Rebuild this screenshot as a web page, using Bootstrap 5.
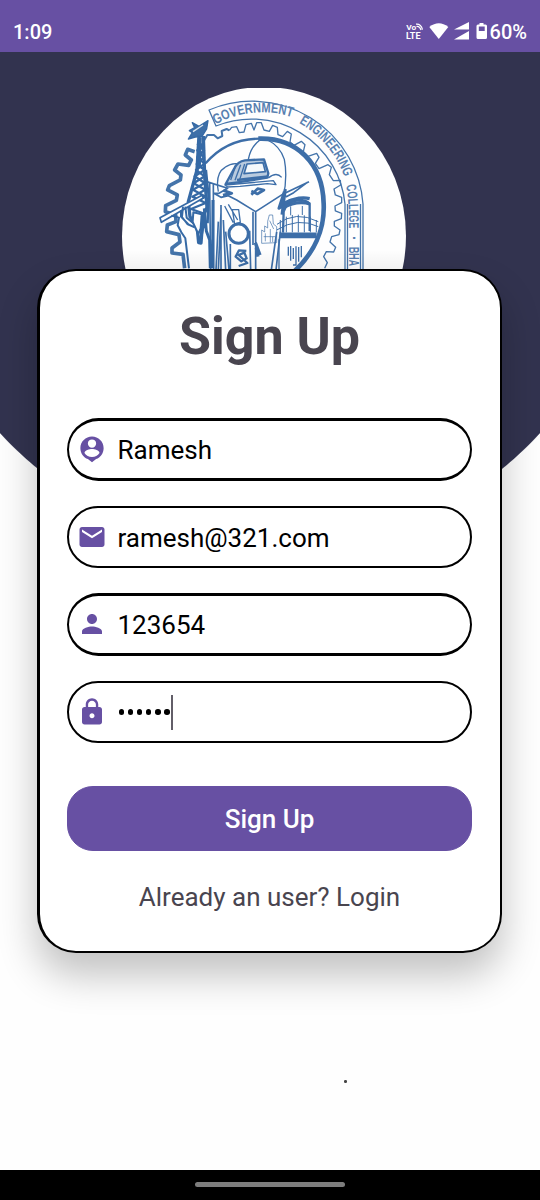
<!DOCTYPE html>
<html lang="en">
<head>
<meta charset="utf-8">
<meta name="viewport" content="width=device-width, initial-scale=1">
<title>Sign Up</title>
<link href="https://cdn.jsdelivr.net/npm/bootstrap@5.3.0/dist/css/bootstrap.min.css" rel="stylesheet">
<style>
  :root { --brand: #6750a3; --navy: #32334f; --ink: #49454f; }
  body { font-family: Roboto, sans-serif; height: 1200px; overflow: hidden; background: #fff; }
  .status-bar { height: 52px; background: var(--brand); font-size: 20px; font-weight: 500; line-height: 24px; padding: 20px 13px 0 13px; }
  .screen { background: radial-gradient(circle at 270px 132.6px, var(--navy) 366.5px, #fefefe 367.5px); padding-top: 36px; }
  .crest { width: 284px; height: 181px; margin-left: 122px; }
  .signup-panel { width: 465px; height: 684px; margin-left: 37px; border: 2.5px solid #000; border-left-width: 3px; border-radius: 39px; padding: 0 28px 0 27px;
    box-shadow: 0 22px 38px 1px rgba(0,0,0,.235); }
  .signup-title { font-size: 52px; font-weight: 700; line-height: 60px; color: var(--ink); margin-top: 36px; margin-bottom: 51px; }
  .fields { gap: 25.5px; }
  .field-box { height: 62px; border: 2px solid #000; padding-left: 8px; gap: 10px; }
  .field-box:nth-child(odd) { border-width: 3px 2px; height: 63px; margin-bottom: -1px; }
  .field-box:nth-child(odd) > * { margin-top: -1.5px; }
  .field-box svg { width: 30px; height: 30px; fill: var(--brand); flex: none; }
  .field-text { font-size: 26px; line-height: 32px; color: #000; border: 0; padding: 2px 0 0 .5px; }
  .pw-dot { width: 5.6px; height: 5.6px; background: #000; }
  .pw-dots { gap: 3.5px; padding: 1px 0 0 1.6px; }
  .caret { width: 2px; height: 35px; background: #625e68; margin-left: -2.2px; }
  .btn-brand { --bs-btn-color: #fff; --bs-btn-bg: var(--brand); --bs-btn-border-color: var(--brand); height: 65px; border-radius: 26px; margin-top: 43px; font-size: 26px; font-weight: 500; padding-top: 8px; }
  .login-line { font-size: 26px; line-height: 32px; color: var(--ink); margin-top: 30px; }
  .stray-dot { width: 2.5px; height: 2.5px; background: #444; margin: 127px 0 0 344px; }
  .nav-strip { height: 30px; padding-bottom: 2px; }
  .nav-pill { width: 150px; height: 5px; background: #7d7d7d; }
</style>
</head>
<body class="d-flex flex-column">
<header class="status-bar d-flex justify-content-between align-items-start text-white flex-shrink-0">
  <span>1:09</span>
  <div class="d-flex">
    <svg width="84" height="24" viewBox="408 20 84 24" fill="#fff">
      <text x="407" y="30" font-size="7.5" font-weight="700" textLength="10" lengthAdjust="spacingAndGlyphs" transform="translate(1.200 0)">Vo</text>
      <text x="408" y="38.5" font-size="8.5" font-weight="700" textLength="14.5" lengthAdjust="spacingAndGlyphs">LTE</text>
      <path d="M418.500 26.500q3-1 4.500 3.500M418 24.200q5-.5 6.500 5.500" fill="none" stroke="#fff" stroke-width="1.200"/>
      <path d="M431.300 27q9.500-7.500 19 0l-9.500 12z"/>
      <path d="M471 22v7.500h-15zM471 31v8.500h-15z"/>
      <path fill-rule="evenodd" d="M481.500 23h4v1.500h2q1.500 0 1.500 1.500v11.500q0 1.500-1.500 1.500h-7.500q-1.500 0-1.500-1.500V26q0-1.500 1.500-1.500h1.500zm-.7 3.500v4.500h5.900v-4.500z"/>
    </svg>
    <span class="battery-level">60%</span>
  </div>
</header>

<main class="screen flex-grow-1">
  <svg class="crest d-block" viewBox="122 88 284 181" role="img" aria-label="College crest">
    <ellipse cx="264" cy="236" rx="142" ry="149" fill="#fefefe"/>
    <g fill="none" stroke="#4474aa" stroke-linejoin="round">
      <!-- lettered band -->
      <path stroke-width="1.300" d="M345 270V204A94 94 0 0 0 216 126L209 110A111 111 0 0 1 363 204V270M347.500 270V204M360.500 270V204"/>
      <!-- thin cog teeth, right side -->
      <g transform="translate(250 80) scale(.3333)" stroke-width="4">
        <path d="M-62 151L-55 142-40 140-32 158-18 156-12 134 4 130 12 150 20 128 34 128 42 150 58 154 68 136 82 142 84 164 98 170 112 154 124 162 120 186 132 196 154 184 165 194 160 215 174 229 200 220 207 232 196 250 207 266 234 254 244 262 238 284 250 302 271 301 272 315 252 327 256 345 275 352 275 368 255 378 256 393 275 400 274 416 253 424 253 438 270 450 267 464 245 470 240 486 257 502 251 516 229 515 221 530 232 548 224 565"/>
      </g>
      <!-- heavy cog teeth, left side -->
      <g transform="translate(110 80) scale(.3333)">
        <path stroke-width="11" d="M254 215L233 208 226 225 244 240 236 256 204 252 194 270 213 285 211 300 178 317 173 330 202 345 199 361 167 377 166 395 197 405 198 425 172 435 170 455 207 464 210 486 186 504 186 519 219 523 224 565"/>
        <path stroke-width="6" d="M280 185L292 165 312 165 323 175 337 168 335 153 350 147 358 151"/>
      </g>
    </g>

    <g transform="translate(205 140) scale(.3333)" fill="none" stroke="#3d6ea8" stroke-width="5" stroke-linejoin="round">
      <!-- inner wheel -->
      <path stroke-width="7" d="M2 70Q65-4 165-4"/>
      <path stroke-width="14" d="M160-4C275-8 353 70 356 190C360 270 325 340 270 392"/>
      <path stroke-width="4" d="M130 58Q137 20 165 0M188 0Q225 18 238 58Q248 110 235 170M40 155Q30 100 60 82Q85 64 110 75"/>
      <!-- tram -->
      <path stroke-width="7" fill="#b9cbdf" d="M62 132L88 85Q98 64 120 61L177 58 190 100 187 113 98 127z"/>
      <path stroke-width="5" fill="#f4f8fb" d="M126 72L174 68 181 95 117 101z"/>
      <path stroke-width="4" d="M92 77L77 120M107 74L90 121M119 72L104 119M60 135L205 122 213 134 187 131 105 139 68 141zM190 114Q214 94 230 112"/>
      <path stroke-width="8" d="M96 120L189 110M139 164L158 146 177 150 157 162 139 153"/>
      <!-- open book -->
      <path d="M5 125L68 145 42 160 25 159 48 172 70 167 95 180 152 215 236 161 312 125M152 215V390M237 161L244 170 266 158 307 127M25 130L26 390M14 130L17 390"/>
      <path stroke-width="9" d="M55 151L80 160 54 166M238 155L222 205 256 181 294 178M241 147L231 224"/>
      <!-- microscope -->
      <path stroke-width="4" d="M59 198L85 248M70 193L98 240M82 209L101 209 106 247 89 252z"/>
      <circle cx="101" cy="281" r="29" stroke-width="9"/>
      <path stroke-width="5" d="M40 245L33 390M48 218L40 390M48 195V390M55 240L62 390M62 275L72 390M76 312V390M134 272L137 390M144 215V315M215 276L199 390M226 275L213 390"/>
      <path stroke-width="7" d="M124 333L102 331 92 350 109 364 125 355 118 338 101 345 127 369 101 378"/>
      <path stroke-width="10" d="M151 308L165 345M154 324L159 350"/>
      <!-- factory -->
      <path stroke-width="2" d="M170 310V270L179 276V258L188 264V244L193 225 203 225 205 252 215 260V308zM176 290H211M181 280V304M196 267V307M203 290V306M194 242L206 267"/>
      <!-- tower and railing -->
      <path stroke-width="7" fill="#fefefe" d="M234 278L236 215Q245 184 280 180Q304 180 314 191V273"/>
      <path stroke-width="10" d="M234 204Q276 180 315 192M237 190Q280 168 314 176"/>
      <path stroke-width="3" d="M216 253Q272 210 340 245M215 270Q279 230 340 260M226 240V277M244 230V277M262 225V277M280 224V277M298 226V277M316 230V277M334 240V277M257 199V226M292 198V225"/>
      <path stroke-width="17" d="M224 286H335"/>
      <path stroke-width="4" d="M222 298V390M250 320V347M257 318V362M265 324V357M273 319V376M281 321V365M289 318V352M264 375H275"/>
    </g>

    <!-- lattice mast with dish and hand -->
    <g transform="translate(110 80) scale(.3333)" fill="none" stroke="#3569a5" stroke-linejoin="round">
      <path fill="#3d6fa8" stroke-width="4" d="M247 128L267 139 294 122 290 147 276 169 256 171 235 177 247 158 238 152 254 143z"/>
      <path stroke="#dce7f1" stroke-width="4" d="M249 155L279 135"/>
      <path stroke-width="10" d="M267 167L261 270 235 365 240 410 261 438 266 488 273 489 279 410 291 382 284 288 280 168"/>
      <path stroke-width="7" d="M272 172L269 265M262 190L282 211 262 232 284 251 258 270 284 289 251 310 286 329 247 350 287 369 243 387 286 402M280 190L262 211 282 232 260 252 284 270 254 289 284 309 249 329 287 350 241 370M288 270L296 350 293 430"/>
      <path fill="#fefefe" stroke-width="5" d="M150 413L276 346 280 354 154 427z"/>
      <path stroke-width="6" d="M184 407L207 413 203 436 214 457 226 475 237 565M219 380L216 411 232 432 254 442M226 380L230 413 250 430M213 391V410L237 435"/>
      <path fill="#fefefe" stroke-width="6" d="M250 397L275 403 272 445 265 462 248 426z"/>
      <path stroke-width="9" d="M283 385L289 453 299 480 301 565M288 420L278 445 269 491M309 360L308 565"/>
    </g>

    <defs>
      <path id="govArc" d="M215.500 124.500A95.500 95.500 0 0 1 296 118.500"/>
      <path id="engArc" d="M299 123A99 99 0 0 1 345 179"/>
      <path id="colArc" d="M346 186Q349 195 349 229V300"/>
    </defs>
    <g fill="#5880b0" font-family="Liberation Sans, sans-serif" font-weight="700" font-size="14">
      <text><textPath href="#govArc" textLength="79" lengthAdjust="spacingAndGlyphs">GOVERNMENT</textPath></text>
      <text><textPath href="#engArc" textLength="72" lengthAdjust="spacingAndGlyphs">ENGINEERING</textPath></text>
      <text><textPath href="#colArc" textLength="43" lengthAdjust="spacingAndGlyphs">COLLEGE</textPath></text>
      <text transform="translate(349 236) rotate(90)">·</text>
      <text transform="translate(349 247) rotate(90)" textLength="19" lengthAdjust="spacingAndGlyphs">BHA</text>
    </g>
    <linearGradient id="crestShade" x1="0" y1="0" x2="0" y2="1"><stop stop-color="#000" stop-opacity="0"/><stop offset="1" stop-color="#000" stop-opacity=".05"/></linearGradient>
    <rect x="122" y="250" width="284" height="19" fill="url(#crestShade)"/>
  </svg>

  <form class="signup-panel d-flex flex-column bg-white">
    <h1 class="signup-title text-center text-nowrap">Sign Up</h1>
    <div class="fields d-flex flex-column">
      <div class="field-box d-flex align-items-center rounded-pill">
        <svg viewBox="0 0 24 24"><path d="M12 2C6.900 2 2.700 6.100 2.700 11.300c0 4 2.500 7.400 6 8.700L12 22.500l3.300-2.500c3.500-1.300 6-4.700 6-8.700C21.300 6.100 17.100 2 12 2zm0 2.300a3.300 3.300 0 1 1 0 6.600 3.300 3.300 0 0 1 0-6.600zm0 14c-2.500 0-4.700-1.300-6-3.200 0-2 4-3.100 6-3.100s6 1.100 6 3.100a7.200 7.200 0 0 1-6 3.200z"/></svg>
        <span class="field-text">Ramesh</span>
      </div>
      <div class="field-box d-flex align-items-center rounded-pill">
        <svg viewBox="0 0 24 24"><path d="M20 4H4c-1.100 0-2 .9-2 2v12c0 1.100.9 2 2 2h16c1.100 0 2-.9 2-2V6c0-1.100-.9-2-2-2zm0 4-8 5-8-5V6l8 5 8-5v2z"/></svg>
        <span class="field-text">ramesh@321.com</span>
      </div>
      <div class="field-box d-flex align-items-center rounded-pill">
        <svg viewBox="0 0 24 24"><path d="M12 12c2.210 0 4-1.790 4-4s-1.790-4-4-4-4 1.790-4 4 1.790 4 4 4zm0 2c-2.670 0-8 1.340-8 4v2h16v-2c0-2.660-5.330-4-8-4z"/></svg>
        <span class="field-text">123654</span>
      </div>
      <div class="field-box d-flex align-items-center rounded-pill">
        <svg viewBox="0 0 24 24"><path d="M18 8h-1V6c0-2.760-2.240-5-5-5S7 3.240 7 6v2H6c-1.100 0-2 .9-2 2v10c0 1.100.9 2 2 2h12c1.100 0 2-.9 2-2V10c0-1.100-.9-2-2-2zm-6 9c-1.100 0-2-.9-2-2s.9-2 2-2 2 .9 2 2-.9 2-2 2zm3.100-9H8.900V6c0-1.710 1.390-3.100 3.100-3.100s3.100 1.390 3.100 3.100v2z"/></svg>
        <div class="pw-dots d-flex align-items-center">
          <i class="pw-dot rounded-circle"></i><i class="pw-dot rounded-circle"></i><i class="pw-dot rounded-circle"></i><i class="pw-dot rounded-circle"></i><i class="pw-dot rounded-circle"></i><i class="pw-dot rounded-circle"></i>
          <span class="caret"></span>
        </div>
      </div>
    </div>
    <button type="button" class="btn btn-brand w-100">Sign Up</button>
    <div class="login-line text-center">Already an user? Login</div>
  </form>
  <div class="stray-dot rounded-circle"></div>
</main>

<footer class="nav-strip bg-black d-flex justify-content-center align-items-center flex-shrink-0">
  <span class="nav-pill rounded-pill"></span>
</footer>
<script src="https://cdn.jsdelivr.net/npm/bootstrap@5.3.0/dist/js/bootstrap.bundle.min.js"></script>
</body>
</html>
